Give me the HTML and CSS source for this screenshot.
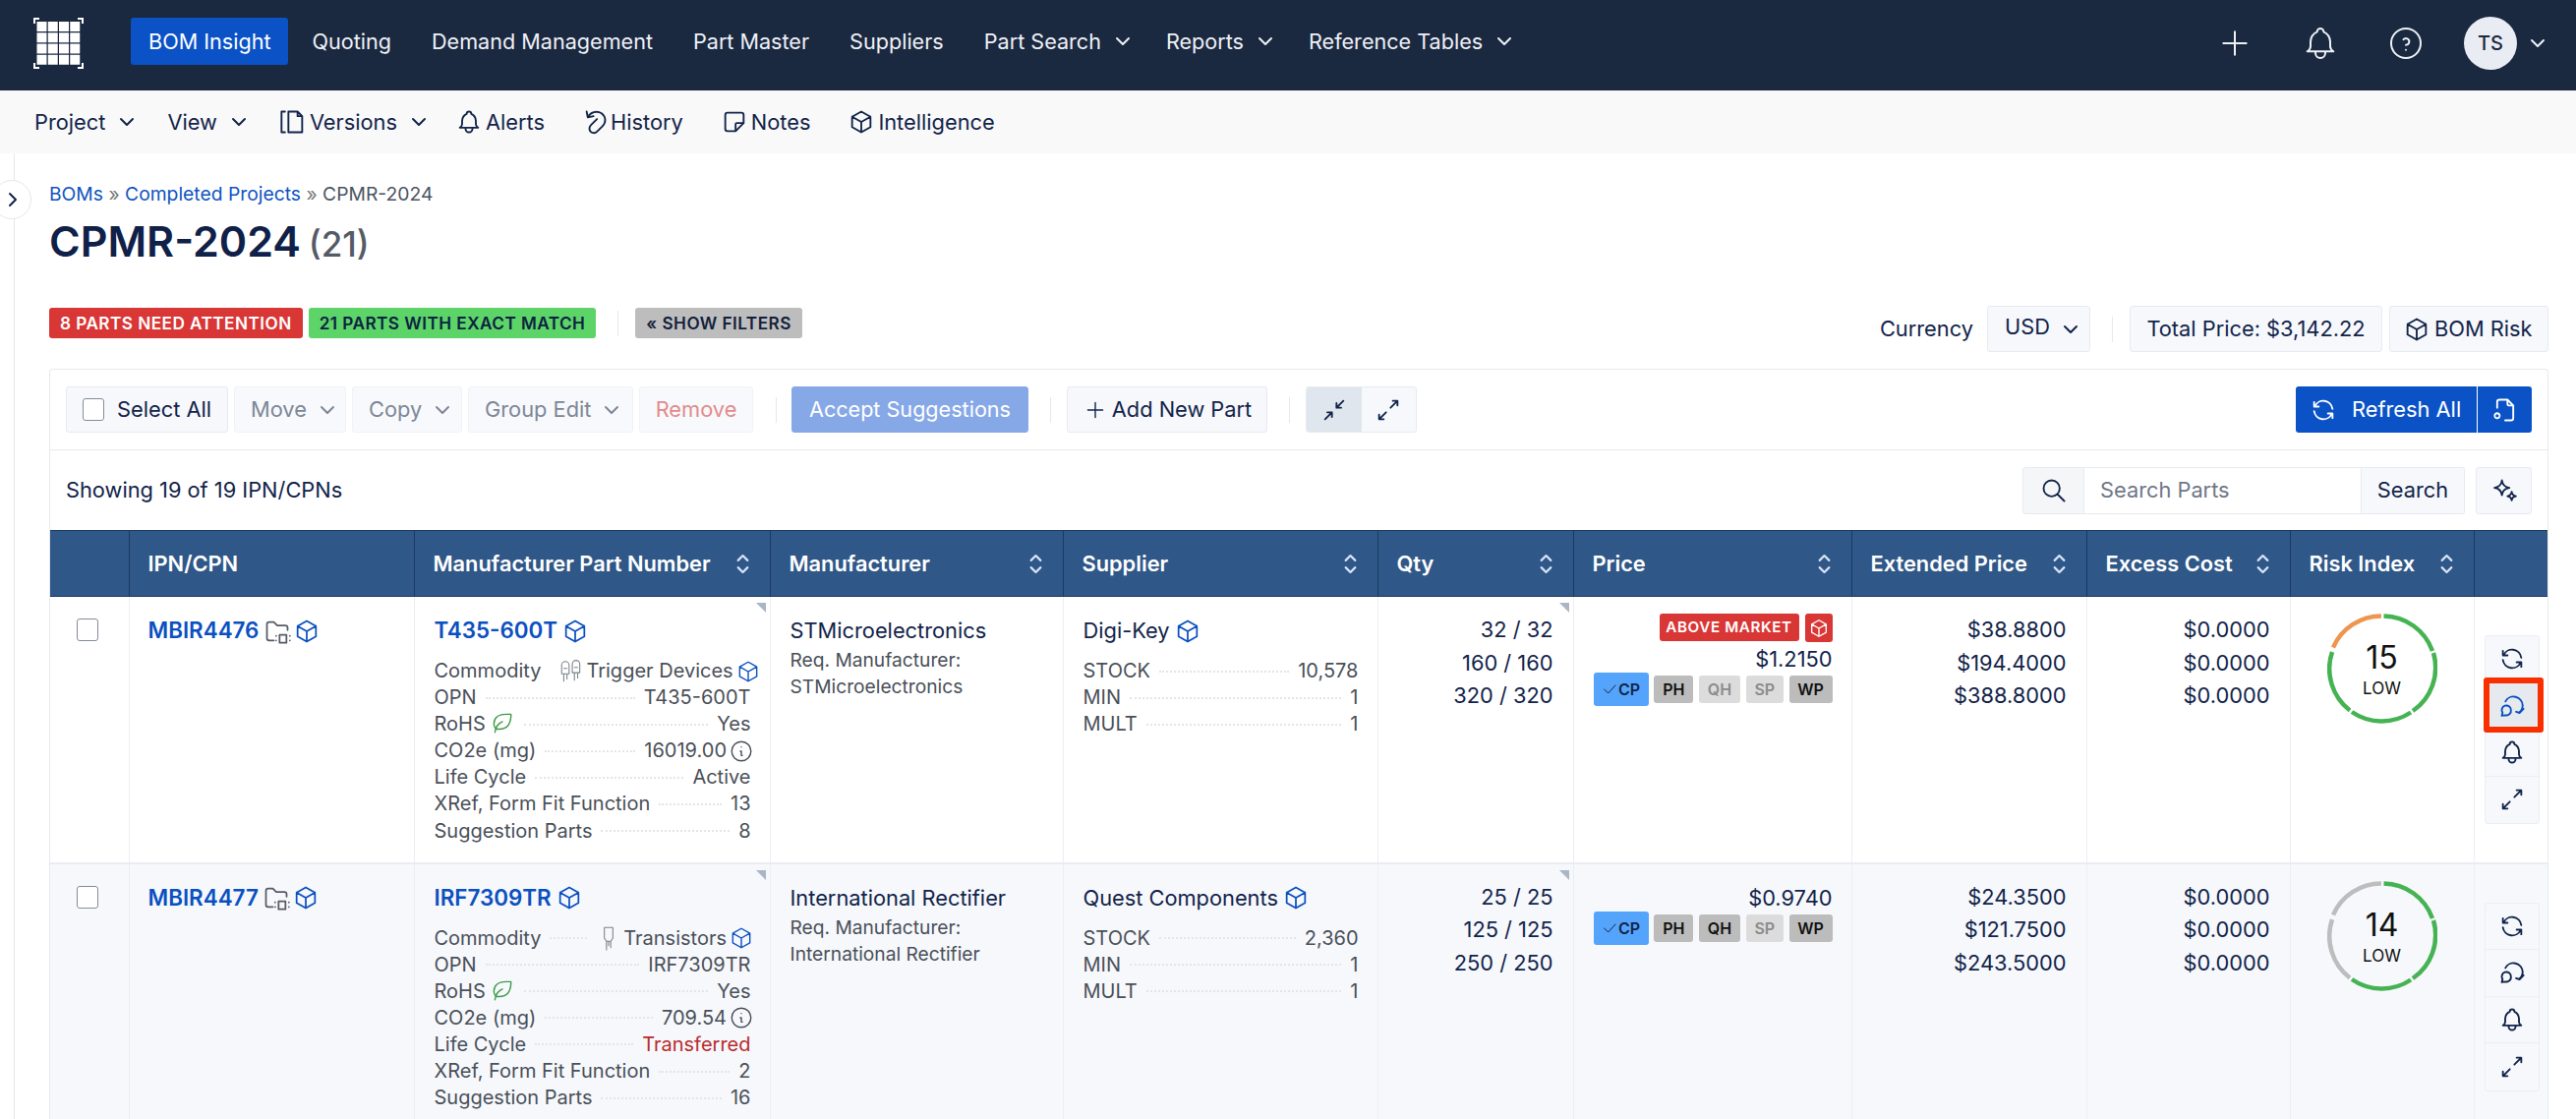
FILE: index.html
```html
<!DOCTYPE html>
<html lang="en">
<head>
<meta charset="utf-8">
<title>CPMR-2024</title>
<link rel="stylesheet" href="styles.css">
</head>
<body>
<svg class="defs" width="0" height="0" aria-hidden="true">
  <symbol id="i-chev" viewBox="0 0 24 24"><path d="M6 9l6 6l6-6"/></symbol>
  <symbol id="i-plus" viewBox="0 0 24 24"><path d="M12 5v14M5 12h14"/></symbol>
  <symbol id="i-bell" viewBox="0 0 24 24"><path d="M10 5a2 2 0 1 1 4 0a7 7 0 0 1 4 6v3a4 4 0 0 0 2 3h-16a4 4 0 0 0 2-3v-3a7 7 0 0 1 4-6M9 17v1a3 3 0 0 0 6 0v-1"/></symbol>
  <symbol id="i-help" viewBox="0 0 24 24"><path d="M3 12a9 9 0 1 0 18 0a9 9 0 0 0-18 0M12 16v.01M12 13a2 2 0 0 0 .914-3.782a1.980 1.980 0 0 0-2.414.483"/></symbol>
  <symbol id="i-sel" viewBox="0 0 24 24"><path d="M8 9l4-4l4 4M16 15l-4 4l-4-4"/></symbol>
  <symbol id="i-box" viewBox="0 0 24 24"><path d="M12 3l8 4.500v9l-8 4.500l-8-4.500v-9zM12 12l8-4.500M12 12v9M12 12l-8-4.500"/></symbol>
  <symbol id="i-refresh" viewBox="0 0 24 24"><path d="M20 11a8.100 8.100 0 0 0-15.500-2m-.5-4v4h4M4 13a8.100 8.100 0 0 0 15.500 2m.5 4v-4h-4"/></symbol>
  <symbol id="i-exp" viewBox="0 0 24 24"><path d="M16 4h4v4M14 10l6-6M8 20h-4v-4M4 20l6-6"/></symbol>
  <symbol id="i-min" viewBox="0 0 24 24"><path d="M18 10h-4v-4M20 4l-6 6M6 14h4v4M10 14l-6 6"/></symbol>
  <symbol id="i-note" viewBox="0 0 24 24"><path d="M13 20l7-7M13 20v-6a1 1 0 0 1 1-1h6v-7a2 2 0 0 0-2-2h-12a2 2 0 0 0-2 2v12a2 2 0 0 0 2 2h7"/></symbol>
  <symbol id="i-ver" viewBox="0 0 24 24"><path d="M8 3h8l4 4v14h-12zM16 3v4h4M5 3h-3v18h3"/></symbol>
  <symbol id="i-hist" viewBox="0 0 24 24"><path d="M4 3l1 5l5-1M5 8a8.500 8.500 0 0 1 12-3.500c4 3 4 8 1 11l-5 5c-2 2-5 1-6-.5c-1-2-.5-4 1-5.500l5-5"/></symbol>
  <symbol id="i-loop" viewBox="0 0 24 24"><path d="M6.200 8a8 8 0 0 1 15 3.500c0 2.500-1 4.500-3 6M22 14.500l-3.500 3.500l-3-1M11 15.500a4 4 0 1 0-7.300 2.300l-.7 2.700l3-.5a4 4 0 0 0 5-4.500"/></symbol>
  <symbol id="i-info" viewBox="0 0 24 24"><path d="M3 12a9 9 0 1 0 18 0a9 9 0 0 0-18 0M12 8h.01M11 12h1v4h1"/></symbol>
  <symbol id="i-search" viewBox="0 0 24 24"><path d="M3 10a7 7 0 1 0 14 0a7 7 0 1 0-14 0M21 21l-6-6"/></symbol>
  <symbol id="i-leaf" viewBox="0 0 24 24"><path d="M5 21c.5-4.500 2.500-8 7-10M9 18c6.200 0 10.500-3.300 11-12v-2h-4c-9 0-12 4-12 9c0 1 0 3 2 5h3z"/></symbol>
  <symbol id="i-spark" viewBox="0 0 24 24"><path d="M10 3c.5 4 2.500 6 6.500 6.500c-4 .5-6 2.500-6.500 6.500c-.5-4-2.500-6-6.500-6.500c4-.5 6-2.500 6.500-6.500zM18.500 13c.3 2 1.500 3.500 3.700 3.800c-2.200.3-3.400 1.500-3.700 3.700c-.3-2.200-1.500-3.400-3.700-3.700c2.200-.3 3.400-1.800 3.700-3.800z"/></symbol>
  <symbol id="i-folder" viewBox="0 0 24 24"><path d="M9 20h-4a2 2 0 0 1-2-2v-12a2 2 0 0 1 2-2h4l3 3h7a2 2 0 0 1 2 2v2M14 15h6v7h-6zM11 16v.01M11 20v.01M23 16v.01M23 20v.01"/></symbol>
  <symbol id="i-trig" viewBox="0 0 24 24"><path d="M3 6a3.500 3.500 0 0 1 7 0v8h-7zM13 5a3.500 3.500 0 0 1 7 0v8h-7zM5 14v7M8 14v5M15 13v7M18 13v5M5 9h3M15 8h3"/></symbol>
  <symbol id="i-tran" viewBox="0 0 24 24"><path d="M8 2h8v10l-2 3h-4l-2-3zM10 15v8M14 15v6M12 15v4"/></symbol>
  <symbol id="i-doc" viewBox="0 0 24 24"><path d="M5 10v-5a2 2 0 0 1 2-2h7l5 5v11a2 2 0 0 1-2 2h-5M14 3v4a1 1 0 0 0 1 1h4M2.800 17a2.200 2.200 0 1 0 4.400 0a2.200 2.200 0 1 0-4.400 0"/></symbol>
</svg>

<header class="topnav">
  <svg class="logo" viewBox="0 0 51 52"><path class="logo-corners" d="M1 6V1h5M45 1h5v5M1 46v5h5M45 51h5v-5"/><g class="logo-cells"><rect x="3.500" y="4" width="10" height="10"/><rect x="14.750" y="4" width="10" height="10"/><rect x="26" y="4" width="10" height="10"/><rect x="37.250" y="4" width="10" height="10"/><rect x="3.500" y="15.250" width="10" height="10"/><rect x="14.750" y="15.250" width="10" height="10"/><rect x="26" y="15.250" width="10" height="10"/><rect x="37.250" y="15.250" width="10" height="10"/><rect x="3.500" y="26.500" width="10" height="10"/><rect x="14.750" y="26.500" width="10" height="10"/><rect x="26" y="26.500" width="10" height="10"/><rect x="37.250" y="26.500" width="10" height="10"/><rect x="3.500" y="37.750" width="10" height="10"/><rect x="14.750" y="37.750" width="10" height="10"/><rect x="26" y="37.750" width="10" height="10"/><rect x="37.250" y="37.750" width="10" height="10"/></g></svg>
  <nav class="topmenu">
    <a class="topitem active">BOM Insight</a>
    <a class="topitem">Quoting</a>
    <a class="topitem">Demand Management</a>
    <a class="topitem">Part Master</a>
    <a class="topitem">Suppliers</a>
    <a class="topitem">Part Search <svg class="ic chev"><use href="#i-chev"/></svg></a>
    <a class="topitem">Reports <svg class="ic chev"><use href="#i-chev"/></svg></a>
    <a class="topitem">Reference Tables <svg class="ic chev"><use href="#i-chev"/></svg></a>
  </nav>
  <div class="topright">
    <svg class="ic ic-40"><use href="#i-plus"/></svg>
    <svg class="ic ic-40 gap-l"><use href="#i-bell"/></svg>
    <svg class="ic ic-40 gap-l"><use href="#i-help"/></svg>
    <span class="avatar">TS</span>
    <svg class="ic chev avatar-chev"><use href="#i-chev"/></svg>
  </div>
</header>

<div class="subnav">
  <a class="subitem">Project <svg class="ic chev"><use href="#i-chev"/></svg></a>
  <a class="subitem">View <svg class="ic chev"><use href="#i-chev"/></svg></a>
  <a class="subitem sub-versions"><svg class="ic ic-28"><use href="#i-ver"/></svg>Versions <svg class="ic chev"><use href="#i-chev"/></svg></a>
  <a class="subitem"><svg class="ic ic-28"><use href="#i-bell"/></svg>Alerts</a>
  <a class="subitem sub-tight"><svg class="ic ic-28"><use href="#i-hist"/></svg>History</a>
  <a class="subitem"><svg class="ic ic-28"><use href="#i-note"/></svg>Notes</a>
  <a class="subitem"><svg class="ic ic-28"><use href="#i-box"/></svg>Intelligence</a>
</div>

<div class="page">
  <aside class="rail"><span class="rail-toggle"><svg class="ic chev" viewBox="0 0 24 24"><path d="M9 6l6 6l-6 6"/></svg></span></aside>
  <main class="content">
    <div class="crumbs"><a>BOMs</a> <span class="sep">»</span> <a>Completed Projects</a> <span class="sep">»</span> <span>CPMR-2024</span></div>
    <h1 class="title">CPMR-2024 <small>(21)</small></h1>

    <div class="statusbar">
      <div class="badges">
        <span class="badge b-red">8 Parts Need Attention</span>
        <span class="badge b-green">21 Parts With Exact Match</span>
        <i class="vsep"></i>
        <span class="badge b-gray">« Show Filters</span>
      </div>
      <div class="totals">
        <span class="cur-label">Currency</span>
        <span class="btn usd">USD <svg class="ic chev"><use href="#i-chev"/></svg></span>
        <i class="vsep"></i>
        <span class="btn total">Total Price: $3,142.22</span>
        <span class="btn bomrisk"><svg class="ic ic-28"><use href="#i-box"/></svg>BOM Risk</span>
      </div>
    </div>

    <section class="card">
      <div class="toolbar">
        <span class="btn selall"><span class="check"></span>Select All</span>
        <span class="btn dis w-move">Move <svg class="ic chev"><use href="#i-chev"/></svg></span>
        <span class="btn dis w-copy">Copy <svg class="ic chev"><use href="#i-chev"/></svg></span>
        <span class="btn dis w-group">Group Edit <svg class="ic chev"><use href="#i-chev"/></svg></span>
        <span class="btn dis-red w-remove">Remove</span>
        <i class="vsep sep-a"></i>
        <span class="btn accept">Accept Suggestions</span>
        <i class="vsep sep-b"></i>
        <span class="btn addnew"><svg class="ic ic-26"><use href="#i-plus"/></svg>Add New Part</span>
        <i class="vsep sep-b"></i>
        <span class="segment">
          <span class="seg seg-on"><svg class="ic ic-28"><use href="#i-min"/></svg></span>
          <span class="seg"><svg class="ic ic-28"><use href="#i-exp"/></svg></span>
        </span>
        <span class="refresh">
          <span class="refresh-main"><svg class="ic ic-28"><use href="#i-refresh"/></svg>Refresh All</span>
          <span class="refresh-doc"><svg class="ic ic-28"><use href="#i-doc"/></svg></span>
        </span>
      </div>

      <div class="searchbar">
        <span class="showing">Showing 19 of 19 IPN/CPNs</span>
        <div class="searchgroup">
          <span class="sg-icon"><svg class="ic ic-28"><use href="#i-search"/></svg></span>
          <span class="sg-input">Search Parts</span>
          <span class="sg-btn">Search</span>
        </div>
        <span class="btn magic"><svg class="ic ic-28"><use href="#i-spark"/></svg></span>
      </div>

      <table class="grid">
        <colgroup>
          <col class="c-chk"><col class="c-ipn"><col class="c-mpn"><col class="c-mfr"><col class="c-sup"><col class="c-qty"><col class="c-price"><col class="c-ext"><col class="c-exc"><col class="c-risk"><col class="c-act">
        </colgroup>
        <thead>
          <tr>
            <th></th>
            <th>IPN/CPN</th>
            <th><span class="th">Manufacturer Part Number<svg class="ic sort"><use href="#i-sel"/></svg></span></th>
            <th><span class="th">Manufacturer<svg class="ic sort"><use href="#i-sel"/></svg></span></th>
            <th><span class="th">Supplier<svg class="ic sort"><use href="#i-sel"/></svg></span></th>
            <th><span class="th">Qty<svg class="ic sort"><use href="#i-sel"/></svg></span></th>
            <th><span class="th">Price<svg class="ic sort"><use href="#i-sel"/></svg></span></th>
            <th><span class="th">Extended Price<svg class="ic sort"><use href="#i-sel"/></svg></span></th>
            <th><span class="th">Excess Cost<svg class="ic sort"><use href="#i-sel"/></svg></span></th>
            <th><span class="th">Risk Index<svg class="ic sort"><use href="#i-sel"/></svg></span></th>
            <th></th>
          </tr>
        </thead>
        <tbody>
          <tr class="row-a">
            <td class="td-chk"><span class="check"></span></td>
            <td class="td-main td-ipn"><a class="plink">MBIR4476</a> <svg class="ic rowic muted-ic"><use href="#i-folder"/></svg> <svg class="ic rowic blue-ic"><use href="#i-box"/></svg></td>
            <td class="td-main corner">
              <div><a class="plink">T435-600T</a> <svg class="ic rowic blue-ic"><use href="#i-box"/></svg></div>
              <dl class="kv">
                <div><dt>Commodity</dt><dd><svg class="ic ic-26 commod"><use href="#i-trig"/></svg>Trigger Devices<svg class="ic ic-26 blue-ic endic"><use href="#i-box"/></svg></dd></div>
                <div><dt>OPN</dt><dd>T435-600T</dd></div>
                <div><dt>RoHS<svg class="ic ic-26 leaf"><use href="#i-leaf"/></svg></dt><dd>Yes</dd></div>
                <div><dt>CO2e (mg)</dt><dd>16019.00<svg class="ic ic-26 endic"><use href="#i-info"/></svg></dd></div>
                <div><dt>Life Cycle</dt><dd>Active</dd></div>
                <div><dt>XRef, Form Fit Function</dt><dd>13</dd></div>
                <div><dt>Suggestion Parts</dt><dd>8</dd></div>
              </dl>
            </td>
            <td class="td-main">
              <div>STMicroelectronics</div>
              <div class="req">Req. Manufacturer:<br>STMicroelectronics</div>
            </td>
            <td class="td-main">
              <div>Digi-Key <svg class="ic rowic blue-ic"><use href="#i-box"/></svg></div>
              <dl class="kv">
                <div><dt>STOCK</dt><dd>10,578</dd></div>
                <div><dt>MIN</dt><dd>1</dd></div>
                <div><dt>MULT</dt><dd>1</dd></div>
              </dl>
            </td>
            <td class="td-num corner">32 / 32<br>160 / 160<br>320 / 320</td>
            <td class="td-price">
              <div class="mkt"><span class="above">Above Market</span><span class="abovebox"><svg class="ic ic-22"><use href="#i-box"/></svg></span></div>
              <div class="pval">$1.2150</div>
              <div class="chips"><span class="chip cp"><svg class="ic ic-16" viewBox="0 0 24 24"><path d="M4 12l6 6l11-12"/></svg>CP</span><span class="chip dark w-ph">PH</span><span class="chip light w-qh">QH</span><span class="chip light w-sp">SP</span><span class="chip dark w-wp">WP</span></div>
            </td>
            <td class="td-num">$38.8800<br>$194.4000<br>$388.8000</td>
            <td class="td-num">$0.0000<br>$0.0000<br>$0.0000</td>
            <td class="td-risk">
              <div class="ring">
                <svg viewBox="0 0 112 112"><path class="arc orange" d="M54.900 2.500A53.500 53.500 0 0 0 6 34.500"/><path class="arc green" d="M57.500 2.500A53.500 53.500 0 0 1 107 38"/><path class="arc green" d="M108 40A53.500 53.500 0 0 1 87 99"/><path class="arc green" d="M85 100.500A53.500 53.500 0 0 1 25 100"/><path class="arc green" d="M23 98.500A53.500 53.500 0 0 1 5 39"/></svg>
                <span class="ring-num">15</span><span class="ring-lab">LOW</span>
              </div>
            </td>
            <td class="td-act">
              <div class="acts">
                <span class="act"><svg class="ic ic-28"><use href="#i-refresh"/></svg></span>
                <span class="act act-hl"><svg class="ic ic-28 blue-ic"><use href="#i-loop"/></svg></span>
                <span class="act"><svg class="ic ic-28"><use href="#i-bell"/></svg></span>
                <span class="act"><svg class="ic ic-28"><use href="#i-exp"/></svg></span>
              </div>
            </td>
          </tr>
          <tr class="row-b">
            <td class="td-chk"><span class="check"></span></td>
            <td class="td-main td-ipn"><a class="plink">MBIR4477</a> <svg class="ic rowic muted-ic"><use href="#i-folder"/></svg> <svg class="ic rowic blue-ic"><use href="#i-box"/></svg></td>
            <td class="td-main corner">
              <div><a class="plink">IRF7309TR</a> <svg class="ic rowic blue-ic"><use href="#i-box"/></svg></div>
              <dl class="kv">
                <div><dt>Commodity</dt><dd><svg class="ic ic-26 commod"><use href="#i-tran"/></svg>Transistors<svg class="ic ic-26 blue-ic endic"><use href="#i-box"/></svg></dd></div>
                <div><dt>OPN</dt><dd>IRF7309TR</dd></div>
                <div><dt>RoHS<svg class="ic ic-26 leaf"><use href="#i-leaf"/></svg></dt><dd>Yes</dd></div>
                <div><dt>CO2e (mg)</dt><dd>709.54<svg class="ic ic-26 endic"><use href="#i-info"/></svg></dd></div>
                <div><dt>Life Cycle</dt><dd class="red-txt">Transferred</dd></div>
                <div><dt>XRef, Form Fit Function</dt><dd>2</dd></div>
                <div><dt>Suggestion Parts</dt><dd>16</dd></div>
              </dl>
            </td>
            <td class="td-main">
              <div>International Rectifier</div>
              <div class="req">Req. Manufacturer:<br>International Rectifier</div>
            </td>
            <td class="td-main">
              <div>Quest Components <svg class="ic rowic blue-ic"><use href="#i-box"/></svg></div>
              <dl class="kv">
                <div><dt>STOCK</dt><dd>2,360</dd></div>
                <div><dt>MIN</dt><dd>1</dd></div>
                <div><dt>MULT</dt><dd>1</dd></div>
              </dl>
            </td>
            <td class="td-num corner">25 / 25<br>125 / 125<br>250 / 250</td>
            <td class="td-price">
              <div class="pval">$0.9740</div>
              <div class="chips"><span class="chip cp"><svg class="ic ic-16" viewBox="0 0 24 24"><path d="M4 12l6 6l11-12"/></svg>CP</span><span class="chip dark w-ph">PH</span><span class="chip dark w-qh">QH</span><span class="chip light w-sp">SP</span><span class="chip dark w-wp">WP</span></div>
            </td>
            <td class="td-num">$24.3500<br>$121.7500<br>$243.5000</td>
            <td class="td-num">$0.0000<br>$0.0000<br>$0.0000</td>
            <td class="td-risk">
              <div class="ring">
                <svg viewBox="0 0 112 112"><path class="arc grayarc" d="M54.900 2.500A53.500 53.500 0 0 0 6 34.500"/><path class="arc green" d="M57.500 2.500A53.500 53.500 0 0 1 107 38"/><path class="arc green" d="M108 40A53.500 53.500 0 0 1 87 99"/><path class="arc green" d="M85 100.500A53.500 53.500 0 0 1 25 100"/><path class="arc grayarc" d="M23 98.500A53.500 53.500 0 0 1 5 39"/></svg>
                <span class="ring-num">14</span><span class="ring-lab">LOW</span>
              </div>
            </td>
            <td class="td-act">
              <div class="acts">
                <span class="act"><svg class="ic ic-28"><use href="#i-refresh"/></svg></span>
                <span class="act"><svg class="ic ic-28"><use href="#i-loop"/></svg></span>
                <span class="act"><svg class="ic ic-28"><use href="#i-bell"/></svg></span>
                <span class="act"><svg class="ic ic-28"><use href="#i-exp"/></svg></span>
              </div>
            </td>
          </tr>
        </tbody>
      </table>
    </section>
  </main>
</div>
</body>
</html>
```

FILE: styles.css
```css
* { box-sizing: border-box; }
html, body { margin: 0; height: 1138px; overflow: hidden; background: #fff; }
body { font-family: Inter, "Liberation Sans", sans-serif; font-size: 21.800px; color: #12244a; line-height: 1.5; }
.defs { position: absolute; }
a { color: inherit; text-decoration: none; }

.ic { display: inline-block; fill: none; stroke: currentColor; stroke-width: 1.500; stroke-linecap: round; stroke-linejoin: round; vertical-align: middle; flex: none; overflow: visible; }
.ic-16 { width: 16px; height: 16px; }
.ic-22 { width: 22px; height: 22px; }
.ic-26 { width: 26px; height: 26px; stroke-width: 1.300; }
.ic-28 { width: 28px; height: 28px; stroke-width: 1.600; }
.ic-40 { width: 40px; height: 40px; stroke-width: 1.200; }
.chev { width: 24px; height: 24px; stroke-width: 2; }

.topnav { height: 92px; background: #1a2840; color: #eef1f6; display: flex; align-items: center; padding-left: 34px; }
.logo { width: 51px; height: 52px; flex: none; margin-bottom: 4px; }
.logo-corners { fill: none; stroke: #fff; stroke-width: 2; }
.logo-cells { fill: #fff; }
.topmenu { display: flex; align-items: center; margin: 0 0 8px 48px; gap: 7px; }
.topitem { height: 48px; display: flex; align-items: center; gap: 10px; padding: 0 17px; border-radius: 3px; white-space: nowrap; font-size: 21.600px; }
.topitem .chev { margin-right: -9px; }
.topitem.active { background: #0a52c6; color: #fff; padding: 0 18px; }
.topright { margin: 0 0 4px auto; display: flex; align-items: center; padding-right: 27px; }
.gap-l { margin-left: 47px; }
.avatar { margin-left: 39px; width: 54px; height: 54px; border-radius: 50%; background: #e9edf3; color: #1a2840; display: flex; align-items: center; justify-content: center; font-size: 20px; font-weight: 500; }
.avatar-chev { margin-left: 9px; }

.subnav { height: 64px; background: #f9f9f9; display: flex; align-items: center; padding-left: 35px; gap: 38px; font-size: 21.800px; }
.subitem { display: flex; align-items: center; gap: 3px; white-space: nowrap; }
.subitem .chev { margin: 0 -9px 0 7px; }
.sub-versions .chev { margin-right: -13px; }
.sub-tight { gap: 1px; }

.page { display: flex; height: 982px; }
.rail { width: 15px; flex: none; border-right: 1px solid #e5e7eb; position: relative; }
.rail-toggle { position: absolute; left: -8px; top: 27px; width: 40px; height: 40px; border-radius: 50%; background: #fff; border: 1px solid #e5e7eb; display: flex; align-items: center; justify-content: center; padding-left: 2px; }
.content { flex: 1; min-width: 0; padding: 30px 28px 0 35px; }

.crumbs { font-size: 19.300px; line-height: 23px; color: #4b5563; }
.crumbs a { color: #0f55c0; }
.crumbs .sep { color: #777; }
.title { margin: 9px 0 0; font-size: 43px; line-height: 54px; font-weight: 600; color: #0f2148; }
.title small { font-size: 35px; font-weight: 500; color: #555b66; margin-left: -3px; }

.statusbar { display: flex; justify-content: space-between; margin-top: 36px; height: 47px; }
.badges { display: flex; align-items: flex-start; gap: 6px; height: 34px; margin-top: 2px; }
.badge { height: 31px; display: flex; align-items: center; padding: 0 11px; border-radius: 3px; font-size: 17.200px; font-weight: 600; text-transform: uppercase; letter-spacing: .45px; white-space: nowrap; }
.b-red { background: #d93636; color: #fff; }
.b-green { background: #5cd468; color: #0c2340; }
.b-gray { background: #bdbdbd; color: #14213b; }
.badges .vsep { margin: 3px 11px 0 16px; height: 26px; }
.vsep { display: block; width: 1px; background: #e6e8ec; height: 26px; flex: none; }

.totals { display: flex; align-items: center; }
.cur-label { margin-right: 14px; }
.btn { height: 47px; display: inline-flex; align-items: center; justify-content: center; background: #f6f8fc; border: 1px solid #e7eaf0; border-radius: 3px; white-space: nowrap; flex: none; }
.usd { width: 105px; justify-content: flex-start; padding: 0 0 4px 17px; gap: 9px; }
.usd .ic { margin-top: 4px; }
.totals .vsep { margin: 0 17px 0 22px; }
.total { width: 257px; }
.bomrisk { width: 162px; margin-left: 7px; gap: 4px; justify-content: flex-start; padding-left: 13px; }

.card { border: 1px solid #e7e9ee; border-bottom: 0; border-radius: 4px 4px 0 0; margin-top: 17px; }
.toolbar { height: 82px; display: flex; align-items: center; padding: 0 16px; border-bottom: 1px solid #e7e9ee; }
.selall { width: 165px; gap: 13px; justify-content: flex-start; padding-left: 16px; }
.check { display: inline-block; width: 22px; height: 23px; border: 1px solid #858c98; border-radius: 3px; background: #fff; flex: none; }
.dis, .dis-red { background: #f8f9fc; border-color: #f0f2f6; color: #7d8797; }
.dis-red { color: #e08c8c; }
.dis { justify-content: flex-start; padding-left: 16px; gap: 9px; }
.w-move { width: 114px; margin-left: 6px; }
.w-copy { width: 112px; margin-left: 6px; }
.w-group { width: 168px; margin-left: 6px; }
.w-remove { width: 116px; margin-left: 6px; }
.sep-a { margin: 0 15px 0 23px; }
.accept { width: 241px; background: #86a8e7; border-color: #86a8e7; color: #fff; font-size: 21.600px; }
.sep-b { margin: 0 16px 0 22px; }
.addnew { width: 204px; gap: 4px; }
.segment { display: flex; width: 113px; height: 47px; border: 1px solid #e7eaf0; border-radius: 3px; background: #f6f8fc; overflow: hidden; flex: none; }
.seg { flex: 1; display: flex; align-items: center; justify-content: center; }
.seg-on { background: #e0e6ee; }
.refresh { margin-left: auto; display: flex; height: 47px; width: 240px; color: #fff; flex: none; }
.refresh-main { background: #0a52c6; flex: 1; display: flex; align-items: center; gap: 15px; padding-left: 14px; border-radius: 3px 0 0 3px; white-space: nowrap; }
.refresh-doc { width: 56px; background: #0a52c6; border-left: 1px solid #fff; display: flex; align-items: center; justify-content: center; border-radius: 0 3px 3px 0; }

.searchbar { height: 81px; display: flex; align-items: center; padding: 0 16px; }
.showing { flex: 1; }
.searchgroup { display: flex; width: 450px; height: 48px; flex: none; }
.sg-icon { width: 63px; background: #f5f6f8; border: 1px solid #e7eaf0; border-radius: 3px 0 0 3px; display: flex; align-items: center; justify-content: center; }
.sg-input { flex: 1; border: 1px solid #e7eaf0; border-left: 0; display: flex; align-items: center; padding-left: 16px; color: #6f7887; }
.sg-btn { width: 105px; background: #f6f8fc; border: 1px solid #e7eaf0; border-left: 0; border-radius: 0 3px 3px 0; display: flex; align-items: center; justify-content: center; }
.magic { width: 57px; margin-left: 11px; height: 48px; }

.grid { width: 2540px; border-collapse: collapse; table-layout: fixed; }
.c-chk { width: 80px; } .c-ipn { width: 290px; } .c-mpn { width: 362px; } .c-mfr { width: 298px; } .c-sup { width: 320px; } .c-qty { width: 199px; } .c-price { width: 283px; } .c-ext { width: 239px; } .c-exc { width: 207px; } .c-risk { width: 187px; } .c-act { width: 75px; }
.grid thead tr { height: 67px; background: #2f5788; }
.grid th { border: 1px solid #1c3a62; border-width: 1px 1px 1px 0; color: #fff; font-weight: 600; font-size: 21.800px; text-align: left; padding: 0 13px 0 19px; white-space: nowrap; }
.grid th:last-child { border-right: 0; }
.th { display: flex; justify-content: space-between; align-items: center; }
.sort { color: #d6e4f7; stroke-width: 1.800; width: 29px; height: 29px; }

.grid td { vertical-align: top; border-right: 1px solid #eceef2; padding: 0; }
.grid td:last-child { border-right: 0; }
.row-a { height: 271px; border-bottom: 2px solid #e9ecf1; }
.row-b { height: 272px; background: #f6f8fc; }

.td-chk { padding-top: 22px !important; text-align: center; }
.td-chk .check { display: block; margin: 0 auto; transform: translateX(-2px); }
.td-main { padding: 17px 19px 0 20px !important; line-height: 34px; position: relative; }
.td-ipn { padding-left: 19px !important; }
.corner { position: relative; }
.corner::after { content: ""; position: absolute; top: 6px; right: 4px; width: 0; height: 0; border-top: 10px solid #aab6c6; border-left: 10px solid transparent; }
.plink { color: #0b50c0; font-weight: 600; font-size: 22.400px; }
.blue-ic { color: #0b50c0; }
.muted-ic { color: #555b66; }
.rowic { width: 28px; height: 28px; stroke-width: 1.500; margin: -3px -2px 0; }
.kv { margin: 11px 0 0; font-size: 20px; line-height: 27.100px; color: #4a5059; }
.kv > div { display: flex; align-items: center; height: 27.100px; }
.kv dt { display: flex; align-items: center; gap: 4px; white-space: nowrap; }
.kv dd { margin: 0; display: flex; align-items: center; gap: 2px; white-space: nowrap; order: 3; }
.kv > div::before { content: ""; order: 2; flex: 1; border-bottom: 2px dotted #e3e5e9; margin: 0 9px; }
.endic { margin-right: -3.500px; }
.commod { color: #7d828a; stroke-width: 1; }
.leaf { color: #3e9a46; margin-top: -3px; }
.red-txt { color: #b92c2c; }
.req { font-size: 19.200px; line-height: 27.100px; color: #4a5059; margin-top: 0; }

.td-num { padding: 17px 20px 0 0 !important; text-align: right; line-height: 33.600px; }
.td-price { padding: 17px 19px 0 20px !important; text-align: right; }
.mkt { display: flex; justify-content: flex-end; gap: 6px; height: 29px; }
.above { background: #d93636; color: #fff; height: 28px; width: 142px; border-radius: 3px; font-size: 15.200px; font-weight: 600; letter-spacing: .6px; text-transform: uppercase; display: flex; align-items: center; justify-content: center; }
.abovebox { background: #d93636; color: #fff; width: 28px; height: 29px; border-radius: 3px; display: flex; align-items: center; justify-content: center; }
.pval { line-height: 34px; }
.chips { display: flex; align-items: center; justify-content: space-between; height: 34px; margin-top: -3px; }
.chip { height: 28px; display: flex; align-items: center; justify-content: center; border-radius: 3px; font-size: 16px; font-weight: 600; line-height: 1; }
.chip.cp { width: 56px; height: 34px; background: #55a4fc; color: #12244a; gap: 1px; }
.chip.dark { background: #bcbcbc; color: #111; }
.chip.light { background: #dcdcdc; color: #8b8b8b; }
.w-ph { width: 40px; } .w-qh { width: 42px; } .w-sp { width: 38px; } .w-wp { width: 44px; }

.td-risk { padding-top: 17px !important; }
.ring { position: relative; width: 112px; height: 112px; margin: 0 auto; display: flex; flex-direction: column; align-items: center; color: #111; }
.ring svg { position: absolute; inset: 0; width: 112px; height: 112px; }
.arc { fill: none; stroke-width: 4.500; }
.orange { stroke: #ec9650; } .green { stroke: #46b353; } .grayarc { stroke: #bdbdbd; }
.ring-num { font-size: 32px; line-height: 40px; margin-top: 25px; }
.ring-lab { font-size: 17px; line-height: 20px; margin-top: 1px; }

.td-act { padding: 39px 9px 0 10px !important; }
.acts { width: 56px; border: 1px solid #eceef2; border-radius: 3px; background: #f6f8fc; display: flex; flex-direction: column; }
.act { height: 47.500px; display: flex; align-items: center; justify-content: center; border-bottom: 1px solid #eceef2; position: relative; }
.act:last-child { border-bottom: 0; }
.act-hl { background: #e6e9ee; border: 0; }
.act-hl::after { content: ""; position: absolute; left: -2px; right: -5px; top: -6px; bottom: -3px; border: 6px solid #f92f00; border-radius: 3px; }
```
